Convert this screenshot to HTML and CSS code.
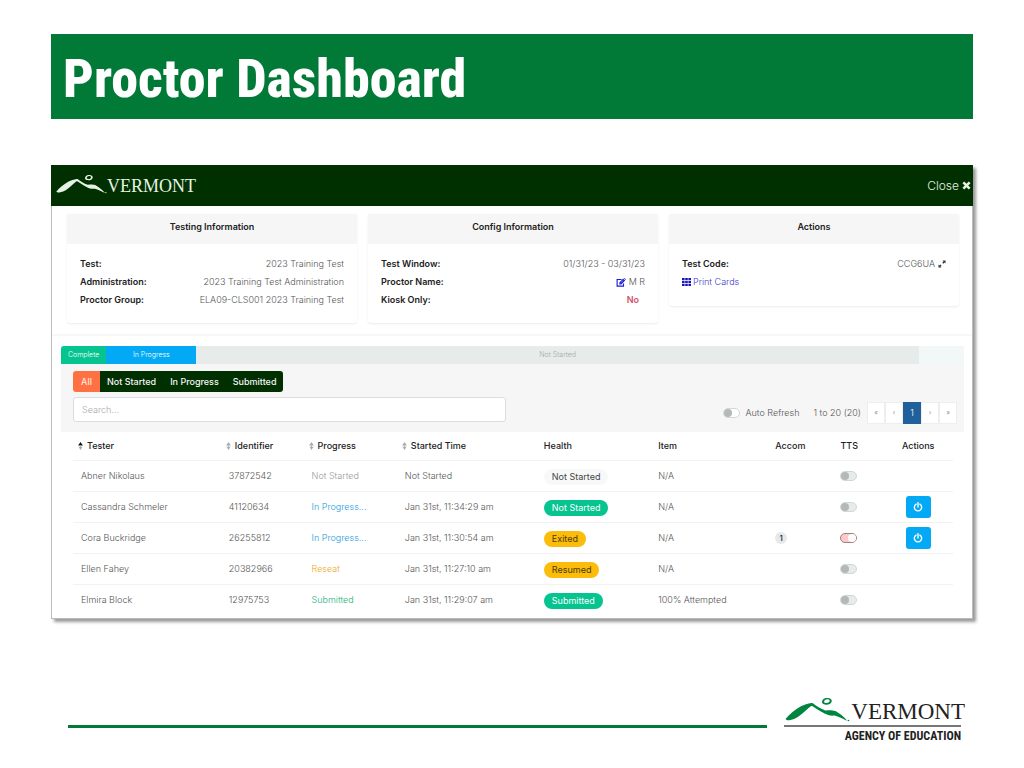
FILE: index.html
```html
<!DOCTYPE html>
<html lang="en">
<head>
<meta charset="utf-8">
<title>Proctor Dashboard</title>
<link rel="stylesheet" href="styles.css">
</head>
<body>
<svg class="defs" aria-hidden="true">
  <symbol id="mountain" viewBox="0 0 64 28">
    <path fill="currentColor" d="M0 21 C4 16 9 12 15 8.500 C19 6.500 22 5.500 26 5 L28 7 C25 8 22 11 18 14.500 C14 18 10 21 5 22 C3 22.500 1 22.500 0 21Z"/>
    <path fill="currentColor" d="M25 5.500 L27 5 C31 8 35 10.500 40 12.500 C44 12 46 12 50 13 C54 15.500 58 18 62 23 C57 20.500 53 18.500 49 17.500 C45 18 42 17 39 15.500 C34 13 30 10 25 7Z"/>
    <path fill="currentColor" fill-rule="evenodd" d="M41 0 C45 0 47 1.500 46 4 C45 6.500 42 7 39.500 6.500 C36 6 36 3.500 37.500 1.500 C38.500 .5 39.500 0 41 0Z M42 1.200 C39.500 1.200 38.300 3 38.700 4.200 C39.500 5.500 42.200 5.300 43.700 4 C44.700 3 44.200 1.200 42 1.200Z"/>
    <circle cx="63" cy="22.500" r=".8" fill="currentColor"/>
  </symbol>
  <symbol id="sort" viewBox="0 0 6 10">
    <path class="up" d="M3 0 L6 4.500 H0Z"/><path class="down" d="M3 10 L.5 6 H5.500Z M2.500 4h1v3h-1z"/>
  </symbol>
  <symbol id="power" viewBox="0 0 16 16">
    <path d="M5 3.500 A5.800 5.800 0 1 0 11 3.500 M8 1 V8" fill="none" stroke="currentColor" stroke-width="2.200" stroke-linecap="round"/>
  </symbol>
</svg>

<header class="banner"><h1>Proctor Dashboard</h1></header>

<main class="dashboard">
  <div class="topbar">
    <div class="logo"><svg class="logo-mark"><use href="#mountain"/></svg><span>VERMONT</span></div>
    <button class="close" type="button">Close
      <svg viewBox="0 0 10 10"><path d="M1.500 1.500 L8.500 8.500 M8.500 1.500 L1.500 8.500" stroke="currentColor" stroke-width="2.800"/></svg>
    </button>
  </div>

  <section class="cards">
    <article class="card">
      <h2>Testing Information</h2>
      <dl>
        <div><dt>Test:</dt><dd>2023 Training Test</dd></div>
        <div><dt>Administration:</dt><dd>2023 Training Test Administration</dd></div>
        <div><dt>Proctor Group:</dt><dd>ELA09-CLS001 2023 Training Test</dd></div>
      </dl>
    </article>
    <article class="card">
      <h2>Config Information</h2>
      <dl>
        <div><dt>Test Window:</dt><dd>01/31/23 - 03/31/23</dd></div>
        <div><dt>Proctor Name:</dt><dd>
          <svg class="edit" viewBox="0 0 18 16"><path d="M10 2.500 H2 V14.500 H13.500 V10" fill="none" stroke="currentColor" stroke-width="2"/><path fill="currentColor" d="M6 8 L13 1 L16.500 4.500 L9.500 11.500 H6Z M14 0 L15 -.5 L18 2.500 L17.300 3.500Z"/><path d="M8 9 L13.500 3.500" stroke="#fff" stroke-width=".8"/></svg>
          M R</dd></div>
        <div><dt>Kiosk Only:</dt><dd class="no">No</dd></div>
      </dl>
    </article>
    <article class="card">
      <h2>Actions</h2>
      <dl>
        <div><dt>Test Code:</dt><dd>CCG6UA
          <svg class="expand" viewBox="0 0 16 16"><path fill="currentColor" d="M9 1 H15 V7 L13 5 L10.500 7.500 L8.500 5.500 L11 3Z M1 9 L3 11 L5 9 L7 11 L5 13 L7 15 H1Z"/></svg></dd></div>
      </dl>
      <a class="print" href="#"><svg viewBox="0 0 9 8"><path fill="currentColor" d="M0 0h2.600v2.200H0z M3.200 0h2.600v2.200H3.200z M6.400 0H9v2.200H6.400z M0 2.900h2.600v2.200H0z M3.200 2.900h2.600v2.200H3.200z M6.400 2.900H9v2.200H6.400z M0 5.800h2.600V8H0z M3.200 5.800h2.600V8H3.200z M6.400 5.800H9V8H6.400z"/></svg>Print Cards</a>
    </article>
  </section>

  <section class="roster">
    <div class="progress">
      <span class="done" style="width:5%">Complete</span>
      <span class="active" style="width:10%">In Progress</span>
      <span class="pending" style="width:80%">Not Started</span>
    </div>
    <div class="tools">
      <div class="tabs">
        <button type="button" class="on">All</button><button type="button">Not Started</button><button type="button">In Progress</button><button type="button">Submitted</button>
      </div>
      <div class="filter">
        <input class="search" type="text" placeholder="Search..." aria-label="Search">
        <div class="paging">
          <label class="refresh"><input class="toggle light" type="checkbox">Auto Refresh</label>
          <span>1 to 20 (20)</span>
          <nav class="pages">
            <button type="button">«</button><button type="button">‹</button><button type="button" class="current">1</button><button type="button">›</button><button type="button">»</button>
          </nav>
        </div>
      </div>
    </div>
    <div class="table-wrap">
    <table>
      <colgroup><col class="c1"><col class="c2"><col class="c3"><col class="c4"><col class="c5"><col class="c6"><col class="c7"><col class="c8"><col class="c9"></colgroup>
      <thead>
        <tr>
          <th class="sortable sorted"><svg><use href="#sort"/></svg>Tester</th>
          <th class="sortable"><svg><use href="#sort"/></svg>Identifier</th>
          <th class="sortable"><svg><use href="#sort"/></svg>Progress</th>
          <th class="sortable"><svg><use href="#sort"/></svg>Started Time</th>
          <th>Health</th><th>Item</th><th>Accom</th><th>TTS</th><th class="center">Actions</th>
        </tr>
      </thead>
      <tbody>
        <tr><td>Abner Nikolaus</td><td>37872542</td><td class="idle">Not Started</td><td>Not Started</td><td><span class="pill plain">Not Started</span></td><td>N/A</td><td></td><td><input class="toggle" type="checkbox" aria-label="TTS for Abner Nikolaus"></td><td></td></tr>
        <tr><td>Cassandra Schmeler</td><td>41120634</td><td class="running">In Progress...</td><td>Jan 31st, 11:34:29 am</td><td><span class="pill green">Not Started</span></td><td>N/A</td><td></td><td><input class="toggle" type="checkbox" aria-label="TTS for Cassandra Schmeler"></td><td class="center"><button class="power" type="button" aria-label="Stop test"><svg><use href="#power"/></svg></button></td></tr>
        <tr><td>Cora Buckridge</td><td>26255812</td><td class="running">In Progress...</td><td>Jan 31st, 11:30:54 am</td><td><span class="pill amber">Exited</span></td><td>N/A</td><td><span class="count">1</span></td><td><input class="toggle" type="checkbox" checked aria-label="TTS for Cora Buckridge"></td><td class="center"><button class="power" type="button" aria-label="Stop test"><svg><use href="#power"/></svg></button></td></tr>
        <tr><td>Ellen Fahey</td><td>20382966</td><td class="reseat">Reseat</td><td>Jan 31st, 11:27:10 am</td><td><span class="pill amber">Resumed</span></td><td>N/A</td><td></td><td><input class="toggle" type="checkbox" aria-label="TTS for Ellen Fahey"></td><td></td></tr>
        <tr><td>Elmira Block</td><td>12975753</td><td class="sent">Submitted</td><td>Jan 31st, 11:29:07 am</td><td><span class="pill green">Submitted</span></td><td>100% Attempted</td><td></td><td><input class="toggle" type="checkbox" aria-label="TTS for Elmira Block"></td><td></td></tr>
      </tbody>
    </table>
    </div>
  </section>
</main>

<footer class="footer">
  <div class="rule"></div>
  <div class="agency">
    <div class="logo"><svg class="logo-mark"><use href="#mountain"/></svg><span>VERMONT</span></div>
    <p>AGENCY OF EDUCATION</p>
  </div>
</footer>
</body>
</html>
```
FILE: styles.css
```css
* { box-sizing: border-box; }
body { margin: 0; padding: 34px 51px 24px; background: #fff; color: #555; font: 300 9px/18px Inter, "Open Sans", sans-serif; }
button, input { font: inherit; }
button { border: 0; padding: 0; cursor: pointer; }
.defs { position: absolute; width: 0; height: 0; }

.banner { display: flex; align-items: center; height: 85px; padding: 4px 12px 0; background: #007a36; }
.banner h1 { margin: 0; color: #fff; font: 800 54px/60px "Roboto Condensed", "Open Sans Condensed", sans-serif; }

.dashboard { margin-top: 46px; padding-bottom: 3px; border: 1px solid #bbb; background: #fff; box-shadow: 3px 3px 3px rgba(0, 0, 0, .4); }
.topbar { display: flex; justify-content: space-between; align-items: center; height: 41px; margin: -1px -1px 0; padding: 0 2px 0 5px; background: #002f00; color: #e4f3e2; }
.logo { display: flex; align-items: center; font-family: "Liberation Serif", serif; }
.topbar .logo { font-size: 18px; }
.topbar .logo-mark { width: 51px; height: 22px; }
.close { display: flex; align-items: center; gap: 3px; background: none; color: inherit; font-size: 12px; }
.close svg { width: 9px; height: 9px; }

.cards { display: grid; grid-template-columns: repeat(3, 1fr); align-items: start; gap: 11px; padding: 8px 13px 11px 15px; border-bottom: 2px solid #f7f7f7; }
.card { border-radius: 3px; background: #fff; box-shadow: 0 1px 2px rgba(0, 0, 0, .08); padding-bottom: 14px; }
.card h2 { margin: 0 0 11px; padding: 4px 0 8px; background: #f6f6f6; color: #222; text-align: center; font: 600 9px/18px Inter, sans-serif; }
.card dl { margin: 0; padding: 0 13px; }
.card dl div { display: flex; justify-content: space-between; }
.card dt { color: #222; font-weight: 600; }
.card dd { display: flex; align-items: center; gap: 3px; margin: 0; }
.card .no { padding-right: 6px; color: #d0526a; font-weight: 600; }
.edit { width: 10px; height: 9px; color: #1919d8; }
.expand { width: 8px; height: 8px; color: #333; }
.print { display: inline-flex; align-items: center; gap: 2px; margin-left: 13px; color: #3c37c9; text-decoration: none; }
.print svg { width: 9px; height: 8px; color: #1a12c0; }

.roster { padding: 10px 8px 0 9px; }
.progress { display: flex; height: 18px; background: #f2f7f7; border-radius: 3px 0 0 0; overflow: hidden; color: #fff; text-align: center; font-size: 7px; font-weight: 300; }
.done { background: #05c48f; }
.active { background: #03a9f4; }
.pending { background: #e7ebea; color: #aaa; }
.tools { padding: 7px 7px 8px 12px; background: #f6f6f6; }
.tabs { display: inline-flex; border-radius: 3px; overflow: hidden; vertical-align: top; }
.tabs button { height: 21px; padding: 0 7px; background: #002f00; color: #f5f5f5; font-size: 9px; font-weight: 500; }
.tabs .on { padding: 0 8px; background: #ff7043; color: #ffe6dc; }
.filter { display: flex; align-items: flex-start; justify-content: space-between; margin-top: 5px; }
.search { width: 49%; height: 25px; padding: 0 8px; border: 1px solid #ddd; border-radius: 3px; background: #fff; color: #555; outline: 0; }
.search::placeholder { color: #aaa; opacity: 1; }
.paging { display: flex; align-items: center; gap: 6px; margin-top: 5px; }
.refresh { display: flex; align-items: center; gap: 5px; margin-right: 8px; }
.pages { display: flex; background: #fff; }
.pages button { width: 18px; height: 22px; border: 1px solid #eee; background: #fff; color: #777; font-size: 7px; }
.pages .current { border-color: #20619c; background: #20619c; color: #fff; font-size: 9px; }

.toggle { appearance: none; display: block; flex: none; width: 17px; height: 10px; margin: 0; border: 1px solid #d3d6d6; border-radius: 5px; background: #e8ebeb; }
.toggle::before { content: ""; display: block; width: 8px; height: 8px; border-radius: 50%; background: #b4b8b8; }
.toggle.light { background: #fff; }
.toggle:checked { border-color: #a08080; background: #ffc9c9; }
.toggle:checked::before { margin-left: 7px; background: #fff; }

.table-wrap { padding: 0 11px 0 12px; }
table { width: 100%; table-layout: fixed; border-collapse: collapse; white-space: nowrap; }
.c1 { width: 16.8%; } .c2 { width: 9.4%; } .c3 { width: 10.6%; }
.c4 { width: 15.8%; } .c5 { width: 13%; } .c6 { width: 13.3%; }
.c7 { width: 7.4%; } .c8 { width: 5.8%; } .c9 { width: 7.9%; }
th { height: 28px; padding: 0 0 0 8px; color: #222; text-align: left; font-weight: 500; }
.sortable { padding-left: 5px; }
.sortable svg { width: 5px; height: 8px; margin-right: 4px; vertical-align: -1px; }
.up { fill: var(--up, #aaa); }
.down { fill: #aaa; }
.sorted { --up: #111; }
td { height: 31px; padding: 0 0 0 8px; border-top: 1px solid #f2f2f2; }
th.center, td.center { padding: 0; text-align: center; }
.idle { color: #999; } .running { color: #1e9be0; } .reseat { color: #f0a828; } .sent { color: #18b07c; }
.pill { display: inline-block; margin-top: 3px; padding: 0 8px; border-radius: 8px; font-weight: 400; line-height: 16px; vertical-align: middle; }
.plain { background: #f7f9f9; color: #444; }
.green { background: #05c48f; color: #fff; }
.amber { background: #fbbc0b; color: #4c3a08; }
.count { display: block; width: 12px; height: 12px; border-radius: 50%; background: #e4e9ea; color: #222; text-align: center; font-size: 8px; font-weight: 500; line-height: 12px; }
.power { width: 25px; height: 22px; border-radius: 3px; background: #03a9f4; color: #fff; vertical-align: middle; }
.power svg { display: block; width: 10px; height: 10px; margin: 0 auto; }

.footer { display: flex; justify-content: space-between; align-items: flex-start; gap: 17px; margin-top: 79px; padding: 0 8px 0 17px; }
.rule { flex: 1; height: 3px; margin-top: 27px; background: #007a36; }
.agency { color: #222; }
.agency .logo { height: 27px; font-size: 23px; }
.agency .logo-mark { width: 67px; height: 28px; color: #00853f; }
.agency p { margin: 0 4px 0 0; border-top: 2px solid #777; text-align: right; font: bold 12px/18px "Roboto Condensed", "Open Sans Condensed", sans-serif; }
```
